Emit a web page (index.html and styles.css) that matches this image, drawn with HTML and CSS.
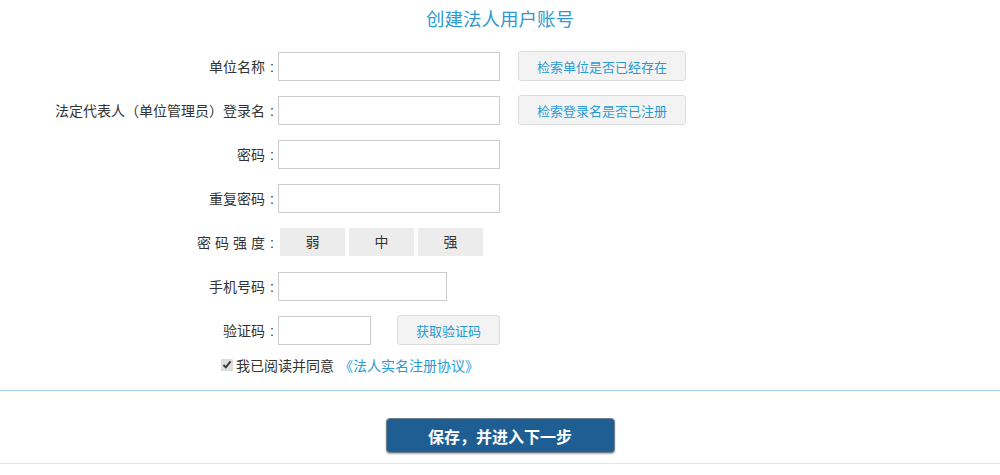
FILE: index.html
```html
<!DOCTYPE html>
<html lang="zh-CN">
<head>
  <meta charset="UTF-8" />
  <meta name="viewport" content="width=device-width, initial-scale=1.0"/>
  <title>创建法人用户账号</title>
  <link rel="stylesheet" href="styles.css">
</head>
<body>
  <h1 class="title">创建法人用户账号</h1>

  <form class="reg-form" onsubmit="return false;">
    <div class="row">
      <label class="label">单位名称<span class="colon">:</span></label>
      <input type="text" class="field"/>
      <button type="button" class="btn-check">检索单位是否已经存在</button>
    </div>
    <div class="row">
      <label class="label">法定代表人（单位管理员）登录名<span class="colon">:</span></label>
      <input type="text" class="field"/>
      <button type="button" class="btn-check">检索登录名是否已注册</button>
    </div>
    <div class="row">
      <label class="label">密码<span class="colon">:</span></label>
      <input type="password" class="field"/>
    </div>
    <div class="row">
      <label class="label">重复密码<span class="colon">:</span></label>
      <input type="password" class="field"/>
    </div>
    <div class="row">
      <label class="label"><span class="spaced">密码强度</span><span class="colon">:</span></label>
      <div class="strength">
        <span>弱</span>
        <span>中</span>
        <span>强</span>
      </div>
    </div>
    <div class="row">
      <label class="label">手机号码<span class="colon">:</span></label>
      <input type="text" class="field field-mid"/>
    </div>
    <div class="row">
      <label class="label">验证码<span class="colon">:</span></label>
      <input type="text" class="field field-short"/>
      <button type="button" class="btn-check btn-code">获取验证码</button>
    </div>
    <div class="agree">
      <input type="checkbox" checked id="agree"/>
      <label for="agree">我已阅读并同意</label>
      <a href="#" class="link">《法人实名注册协议》</a>
    </div>
  </form>

  <div class="actions">
    <button type="button" class="btn-save">保存，并进入下一步</button>
  </div>
</body>
</html>
```

FILE: styles.css
```css
body {
  margin: 0;
  font-family: "Liberation Sans", "Noto Sans CJK SC", sans-serif;
  font-size: 14px;
  color: #333;
  background: #fff;
}
.title {
  margin: 0;
  height: 44px;
  line-height: 40px;
  text-align: center;
  font-size: 18.5px;
  font-weight: normal;
  color: #2d9ad3;
}
.reg-form {
  margin: 0;
}
.row {
  display: flex;
  align-items: center;
  height: 44px;
}
.label {
  width: 276px;
  padding-right: 2px;
  box-sizing: border-box;
  text-align: right;
  flex-shrink: 0;
}
.colon {
  margin-left: 5px;
}
.spaced {
  letter-spacing: 4px;
}
.spaced + .colon {
  margin-left: 1px;
}
.field {
  box-sizing: border-box;
  width: 222px;
  height: 29px;
  margin: 0 0 0 2px;
  border: 1px solid #ccc;
  padding: 0 6px;
}
.field-mid {
  width: 169px;
}
.field-short {
  width: 93px;
}
.btn-check {
  box-sizing: border-box;
  height: 30px;
  width: 168px;
  margin-left: 18px;
  background: #f3f3f3;
  border: 1px solid #dcdcdc;
  border-radius: 3px;
  color: #2a9ad2;
  font-family: inherit;
  font-size: 13px;
}
.btn-code {
  width: 103px;
  margin-left: 26px;
}
.strength {
  display: flex;
  gap: 4px;
  margin-left: 4px;
}
.strength span {
  width: 65px;
  height: 28px;
  line-height: 28px;
  text-align: center;
  background: #ececec;
}
.agree {
  display: flex;
  align-items: center;
  height: 24px;
  padding-left: 221px;
  margin-top: 1px;
}
.agree input {
  margin: 0 3px 0 0;
  width: 12px;
  height: 12px;
  accent-color: #dedede;
}
.link {
  margin-left: 5px;
  color: #2a9ad2;
  text-decoration: none;
}
.actions {
  margin-top: 13px;
  border-top: 1px solid #9fd0ee;
  border-bottom: 1px solid #e6e6e6;
  padding: 27px 0 10px;
  display: flex;
  justify-content: center;
}
.btn-save {
  width: 229px;
  height: 35px;
  background: #1f5e93;
  color: #fff;
  font-family: inherit;
  font-size: 16px;
  font-weight: bold;
  border: 1px solid #6f7f8c;
  border-radius: 4px;
  box-shadow: 0 1px 2px rgba(0, 0, 0, 0.35);
}
```
